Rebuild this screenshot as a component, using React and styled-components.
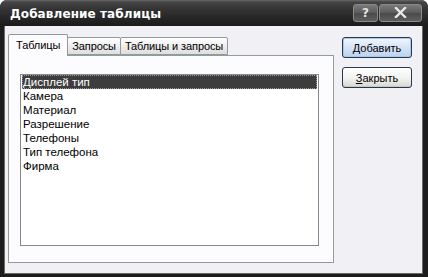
import React, { useState } from 'react'
import styled, { createGlobalStyle } from 'styled-components'

const GlobalStyle = createGlobalStyle`
  html, body {
    margin: 0;
    padding: 0;
    background: #ffffff;
  }
  body {
    font-family: "Liberation Sans", Arial, sans-serif;
    font-size: 11px;
  }
`

const tables = ['Дисплей тип', 'Камера', 'Материал', 'Разрешение', 'Телефоны', 'Тип телефона', 'Фирма']
const tabs = ['Таблицы', 'Запросы', 'Таблицы и запросы']

export default function App() {
	const [tab, setTab] = useState(0)
	const [selected, setSelected] = useState(0)

	return (
		<>
			<GlobalStyle />
			<SWindow>
				<STitleBar>
					<STitle>Добавление таблицы</STitle>
					<SCaptionButtons>
						<SCaptionButton $w={25}>?</SCaptionButton>
						<SCaptionButton $w={43}>
							<svg width="13" height="11" viewBox="0 0 13 11">
								<path d="M2 1 L11 10 M11 1 L2 10" stroke="#e8e8e8" strokeWidth="2.4" strokeLinecap="square" />
							</svg>
						</SCaptionButton>
					</SCaptionButtons>
				</STitleBar>
				<SBody>
					<STabs>
						<STabStrip>
							{tabs.map((t, i) => (
								<STab key={t} $active={i === tab} onClick={() => setTab(i)}>{t}</STab>
							))}
						</STabStrip>
						<SPanel>
							<SList>
								{tables.map((t, i) => (
									<SItem key={t} $selected={i === selected} onClick={() => setSelected(i)}>{t}</SItem>
								))}
							</SList>
						</SPanel>
					</STabs>
					<SButtons>
						<SButton $default><u>Д</u>обавить</SButton>
						<SButton><u>З</u>акрыть</SButton>
					</SButtons>
				</SBody>
			</SWindow>
		</>
	)
}

const SWindow = styled.div`
	width: 428px;
	height: 277px;
	box-sizing: border-box;
	display: flex;
	flex-direction: column;
	background: #1c1c1c;
	border-radius: 7px 7px 0 0;
	overflow: hidden;
	padding: 0 5px 3px 4px;
`

const STitleBar = styled.div`
	height: 26px;
	margin: 0 -5px 0 -4px;
	padding: 0 6px 0 10px;
	display: flex;
	align-items: center;
	justify-content: space-between;
	background: linear-gradient(#6a6a6a 0px, #464646 2px, #323232 10px, #1a1a1a 26px);
	flex-shrink: 0;
`

const STitle = styled.div`
	color: #ffffff;
	font-family: "DejaVu Sans", sans-serif;
	font-weight: bold;
	font-size: 12px;
	letter-spacing: 0.1px;
	margin-top: 2px;
`

const SCaptionButtons = styled.div`
	display: flex;
	gap: 1px;
	margin-top: -1px;
`

const SCaptionButton = styled.div`
	width: ${p => p.$w}px;
	height: 18px;
	box-sizing: border-box;
	border: 1px solid #8a8a8a;
	border-radius: 3px;
	background: linear-gradient(#7a7a7a, #5a5a5a 50%, #4a4a4a 51%, #5e5e5e);
	color: #e4e4e4;
	font-family: "DejaVu Sans", sans-serif;
	font-weight: bold;
	font-size: 12px;
	display: flex;
	align-items: center;
	justify-content: center;
`

const SBody = styled.div`
	flex: 1;
	background: #f1f1f5;
	display: flex;
	padding: 8px 10px 10px 3px;
	gap: 8px;
	border-left: 1px solid #6a6a6a;
	border-right: 1px solid #6a6a6a;
	border-bottom: 1px solid #6a6a6a;
`

const STabs = styled.div`
	width: 327px;
	display: flex;
	flex-direction: column;
`

const STabStrip = styled.div`
	display: flex;
	align-items: flex-end;
	height: 21px;
	position: relative;
	z-index: 1;
`

const STab = styled.div`
	box-sizing: border-box;
	height: ${p => p.$active ? 22 : 18}px;
	padding: 0 ${p => p.$active ? 7 : 4}px;
	border: 1px solid #919b9c;
	border-bottom: ${p => p.$active ? 'none' : '1px solid #919b9c'};
	border-radius: 2px 2px 0 0;
	background: ${p => p.$active ? '#fcfcfe' : 'linear-gradient(#ffffff, #eeeeee 50%, #dedede)'};
	margin-left: ${p => p.$active ? 0 : -1}px;
	margin-bottom: ${p => p.$active ? -1 : 0}px;
	display: flex;
	align-items: center;
	padding-bottom: ${p => p.$active ? 2 : 0}px;
	color: #000;
	white-space: nowrap;
	letter-spacing: -0.1px;
	cursor: default;
`

const SPanel = styled.div`
	flex: 1;
	background: #fcfcfe;
	border: 1px solid #919b9c;
	padding: 18px 14px 16px 11px;
	display: flex;
`

const SList = styled.div`
	flex: 1;
	background: #ffffff;
	border: 1px solid #828790;
	padding: 0 1px;
`

const SItem = styled.div`
	height: 14px;
	line-height: 14px;
	padding-left: 1px;
	font-size: 11.5px;
	color: ${p => p.$selected ? '#ffffff' : '#000000'};
	background: ${p => p.$selected ? '#3d3d3d' : 'transparent'};
	outline: ${p => p.$selected ? '1px dotted #9a9a9a' : 'none'};
	outline-offset: -1px;
	cursor: default;
`

const SButtons = styled.div`
	display: flex;
	flex-direction: column;
	gap: 9px;
	padding-top: 3px;
`

const SButton = styled.button`
	width: 70px;
	height: 21px;
	box-sizing: border-box;
	border: 1px solid #26374f;
	border-radius: 3px;
	font-family: "Liberation Sans", Arial, sans-serif;
	font-size: 11px;
	color: #000;
	padding: 0;
	background: ${p => p.$default
		? 'linear-gradient(#f2f6fc, #d6e4f6 50%, #bcd2ee)'
		: 'linear-gradient(#ffffff, #f2f2f0 55%, #d6d6d2)'};
	box-shadow: ${p => p.$default ? 'inset 0 0 0 1px #a8c8ee' : 'inset 0 -1px 0 #c8c8c0'};
	u { text-decoration: underline; }
`
